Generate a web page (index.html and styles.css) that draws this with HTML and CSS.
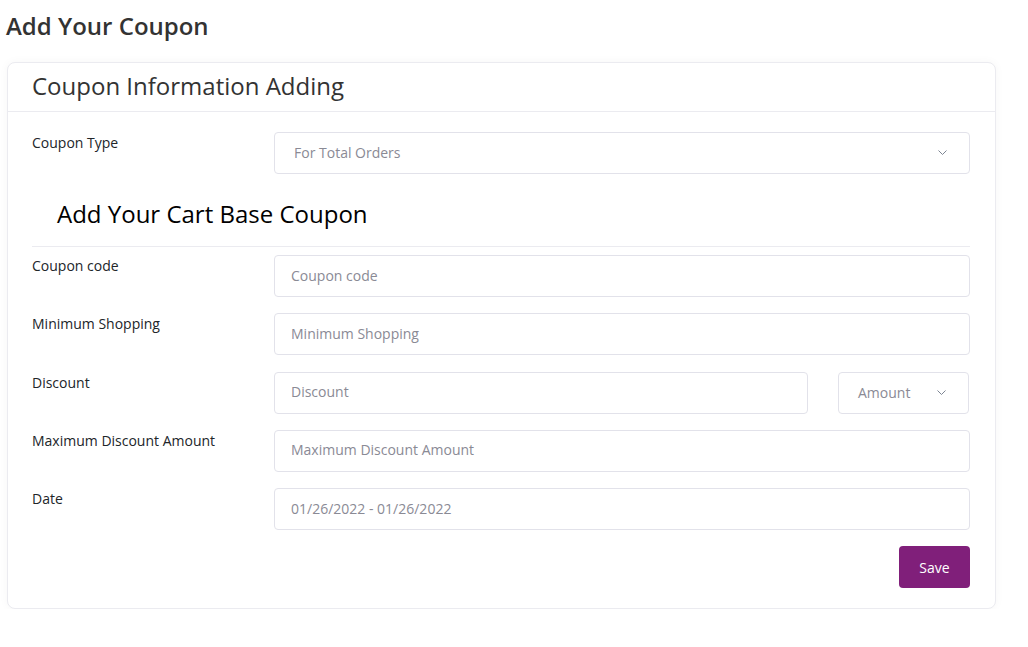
FILE: index.html
```html
<!DOCTYPE html>
<html>
<head>
<meta charset="utf-8">
<link rel="stylesheet" href="styles.css">
</head>
<body>
<div class="page">
  <h1 class="page-title">Add Your Coupon</h1>
  <div class="card">
    <div class="card-header">
      <h2 class="card-title">Coupon Information Adding</h2>
    </div>
    <div class="card-body">
      <div class="row">
        <label class="label">Coupon Type</label>
        <div class="field">
          <div class="select select-wide">
            <span class="select-text">For Total Orders</span>
            <svg class="chev" width="9" height="5" viewBox="0 0 9 5"><path d="M0.5 0.5 L4.5 4.5 L8.5 0.5" fill="none" stroke="#7d8593" stroke-width="1"/></svg>
          </div>
        </div>
      </div>
      <h3 class="section-title">Add Your Cart Base Coupon</h3>
      <div class="divider"></div>
      <div class="row">
        <label class="label">Coupon code</label>
        <div class="field"><div class="input">Coupon code</div></div>
      </div>
      <div class="row">
        <label class="label">Minimum Shopping</label>
        <div class="field"><div class="input">Minimum Shopping</div></div>
      </div>
      <div class="row">
        <label class="label">Discount</label>
        <div class="field field-split">
          <div class="input grow">Discount</div>
          <div class="select select-small">
            <span class="select-text">Amount</span>
            <svg class="chev" width="9" height="5" viewBox="0 0 9 5"><path d="M0.5 0.5 L4.5 4.5 L8.5 0.5" fill="none" stroke="#7d8593" stroke-width="1"/></svg>
          </div>
        </div>
      </div>
      <div class="row">
        <label class="label">Maximum Discount Amount</label>
        <div class="field"><div class="input">Maximum Discount Amount</div></div>
      </div>
      <div class="row">
        <label class="label">Date</label>
        <div class="field"><div class="input">01/26/2022 - 01/26/2022</div></div>
      </div>
      <div class="actions">
        <button class="btn-save">Save</button>
      </div>
    </div>
  </div>
</div>
</body>
</html>
```

FILE: styles.css
```css
* { box-sizing: border-box; }
html, body { margin: 0; padding: 0; background: #fff; }
body {
  font-family: "Open Sans", "Noto Sans", sans-serif;
  color: #212529;
}
.page {
  padding: 9px 32px 0 6px;
}
.page-title {
  margin: 0 0 20px 0;
  font-size: 24px;
  font-weight: 600;
  line-height: 33px;
  color: #333;
}
.card {
  margin-left: 1px;
  border: 1px solid #ebebf0;
  border-radius: 8px;
  box-shadow: 0 0 10px rgba(0,0,0,0.04);
  background: #fff;
}
.card-header {
  border-bottom: 1px solid #ebebf0;
  padding: 6px 24px 8px 24px;
}
.card-title {
  margin: 0;
  font-size: 24px;
  font-weight: 400;
  line-height: 34px;
  color: #333;
}
.card-body {
  padding: 20px 25px 20px 24px;
}
.row {
  display: flex;
  align-items: flex-start;
  margin-bottom: 16.25px;
}
.label {
  width: 242px;
  flex: none;
  font-size: 14px;
  line-height: 20px;
  padding-top: 1px;
  color: #212529;
}
.field {
  flex: 1;
  display: flex;
}
.field-split { gap: 30px; }
.input, .select {
  height: 42px;
  border: 1px solid #e2e2ea;
  border-radius: 4px;
  background: #fff;
  font-size: 14px;
  color: #8a8a95;
  display: flex;
  align-items: center;
}
.input {
  flex: 1;
  padding: 0 16px 2px 16px;
}
.select {
  padding: 0 22px 1px 19px;
  justify-content: space-between;
}
.select-wide { flex: 1; }
.select-small { width: 131px; flex: none; margin-right: 1px; }
.chev { display: block; }
.section-title {
  margin: 22px 0 0 25px;
  font-size: 24px;
  font-weight: 400;
  line-height: 36px;
  color: #000;
}
.divider {
  height: 1px;
  background: #ebebf0;
  margin: 14px 0 8px 0;
}
.actions {
  display: flex;
  justify-content: flex-end;
  margin-top: 1px;
}
.btn-save {
  width: 71px;
  height: 42px;
  border: none;
  border-radius: 4px;
  background: #801f7a;
  color: #fff;
  font-family: "Open Sans", "Noto Sans", sans-serif;
  font-size: 14px;
  cursor: pointer;
}
```
